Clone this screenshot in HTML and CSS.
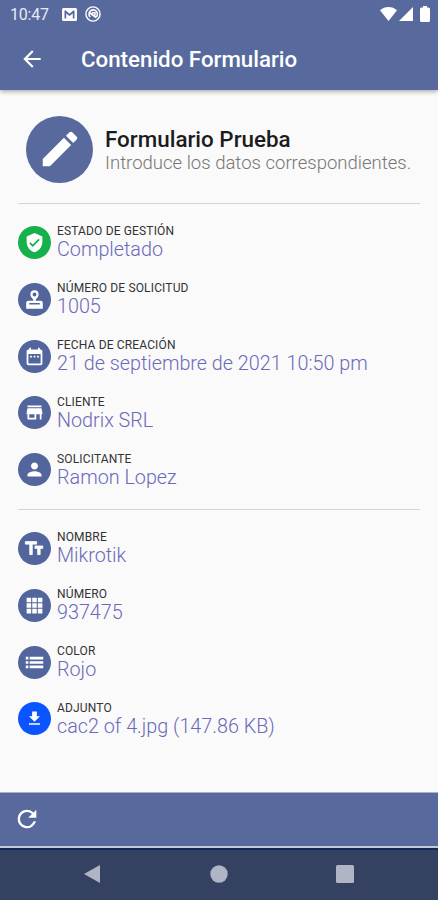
FILE: index.html
```html
<!DOCTYPE html>
<html lang="es">
<head>
    <meta charset="UTF-8">
    <meta name="viewport" content="width=device-width, initial-scale=1.0">
    <title>Contenido Formulario</title>
    <link rel="stylesheet" href="styles.css">
</head>
<body>
    <div class="screen">
        <header class="top">
            <div class="status">
                <span class="time">10:47</span>
                <svg class="status-mail" viewBox="0 0 15 13"><path fill="#fff" fill-rule="evenodd" d="M1.500 0h12A1.500 1.500 0 0 1 15 1.500v10a1.500 1.500 0 0 1-1.500 1.500h-12A1.500 1.500 0 0 1 0 11.500v-10A1.500 1.500 0 0 1 1.500 0zM2.500 2.500V10.500h1.700V5.500l3.300 2.600 3.300-2.600v5h1.700v-8h-1.300L7.500 5.700 3.800 2.500z"/></svg>
                <svg class="status-app" viewBox="0 0 16 16" fill="none" stroke="#fff"><circle cx="8" cy="8" r="7.100" stroke-width="1.400"/><path d="M5.200 11A4.200 4.200 0 1 1 11 11.200M4.500 6.500l6.500 5M7 6.500l3 .5v2.500" stroke-width="1.600"/></svg>
                <span class="spacer"></span>
                <svg class="wifi" viewBox="0 0 17 14"><path fill="#fff" d="M8.500 14L0 3.300C2.300 1.200 5.200 0 8.500 0S14.700 1.200 17 3.300z"/></svg>
                <svg class="signal" viewBox="0 0 14 14"><path fill="#fff" d="M14 0v14H0z"/></svg>
                <svg class="battery" viewBox="0 0 10 16"><path fill="#fff" d="M3 0h4v1.500h1.500A1.500 1.500 0 0 1 10 3v11.500a1.500 1.500 0 0 1-1.500 1.500h-7A1.500 1.500 0 0 1 0 14.500V3a1.500 1.500 0 0 1 1.500-1.500H3z"/></svg>
            </div>
            <div class="toolbar">
                <svg class="back" viewBox="0 0 24 24"><path fill="#fff" d="M20 11H7.830l5.590-5.590L12 4l-8 8 8 8 1.410-1.410L7.830 13H20v-2z"/></svg>
                <h1>Contenido Formulario</h1>
            </div>
        </header>

        <main>
            <section class="intro">
                <div class="avatar">
                    <svg viewBox="0 0 24 24"><path d="M3 17.250V21h3.750L17.810 9.940l-3.750-3.750L3 17.250zM20.710 7.040a1 1 0 0 0 0-1.410l-2.340-2.340a1 1 0 0 0-1.410 0l-1.830 1.830 3.750 3.750 1.830-1.830z"/></svg>
                </div>
                <div class="heading">
                    <h2>Formulario Prueba</h2>
                    <p>Introduce los datos correspondientes.</p>
                </div>
            </section>

            <section class="list">
                <div class="row">
                    <div class="icon green"><svg viewBox="0 0 24 24"><path d="M12 1L3 5v6c0 5.550 3.840 10.740 9 12 5.160-1.260 9-6.450 9-12V5l-9-4zm-2 16l-4-4 1.410-1.410L10 14.170l6.590-6.590L18 9l-8 8z"/></svg></div>
                    <div class="text"><span class="label">ESTADO DE GESTIÓN</span><span class="value">Completado</span></div>
                </div>
                <div class="row">
                    <div class="icon"><svg viewBox="0 0 24 24"><path fill-rule="evenodd" d="M12 1.500a4.700 4.700 0 0 1 4.700 4.700c0 2-1.300 3.500-3.300 5.800V13.500H19a2.500 2.500 0 0 1 2.500 2.500v6.500h-19V16A2.500 2.500 0 0 1 5 13.500h5.600V12C8.600 9.700 7.300 8.200 7.300 6.200A4.700 4.700 0 0 1 12 1.500zm0 2.600a2.200 2.200 0 1 0 0 4.400 2.200 2.200 0 0 0 0-4.400zM6 16v1.800h12V16z"/></svg></div>
                    <div class="text"><span class="label">NÚMERO DE SOLICITUD</span><span class="value">1005</span></div>
                </div>
                <div class="row">
                    <div class="icon"><svg viewBox="0 0 24 24"><path d="M9 11H7v2h2v-2zm4 0h-2v2h2v-2zm4 0h-2v2h2v-2zm2-7h-1V2h-2v2H8V2H6v2H5c-1.110 0-1.990.9-1.990 2L3 20a2 2 0 0 0 2 2h14c1.100 0 2-.9 2-2V6c0-1.100-.9-2-2-2zm0 16H5V9h14v11z"/></svg></div>
                    <div class="text"><span class="label">FECHA DE CREACIÓN</span><span class="value">21 de septiembre de 2021 10:50 pm</span></div>
                </div>
                <div class="row">
                    <div class="icon"><svg viewBox="0 0 24 24"><path d="M20 4H4v2h16V4zm1 10v-2l-1-5H4l-1 5v2h1v6h10v-6h4v6h2v-6h1zm-9 4H6v-4h6v4z"/></svg></div>
                    <div class="text"><span class="label">CLIENTE</span><span class="value">Nodrix SRL</span></div>
                </div>
                <div class="row">
                    <div class="icon"><svg viewBox="0 0 24 24"><path d="M12 12c2.210 0 4-1.790 4-4s-1.790-4-4-4-4 1.790-4 4 1.790 4 4 4zm0 2c-2.670 0-8 1.340-8 4v2h16v-2c0-2.660-5.330-4-8-4z"/></svg></div>
                    <div class="text"><span class="label">SOLICITANTE</span><span class="value">Ramon Lopez</span></div>
                </div>
            </section>

            <section class="list">
                <div class="row">
                    <div class="icon bold"><svg viewBox="0 0 24 24"><path d="M1.500 4v3h5v12h3V7h5V4h-13zm20 5h-9v3h3v7h3v-7h3V9z"/></svg></div>
                    <div class="text"><span class="label">NOMBRE</span><span class="value">Mikrotik</span></div>
                </div>
                <div class="row">
                    <div class="icon"><svg viewBox="0 0 24 24"><path d="M3 3h5.200v5.200H3zM9.400 3h5.200v5.200H9.400zM15.800 3H21v5.200h-5.200zM3 9.400h5.200v5.200H3zM9.400 9.400h5.200v5.200H9.400zM15.800 9.400H21v5.200h-5.200zM3 15.800h5.200V21H3zM9.400 15.800h5.200V21H9.400zM15.800 15.800H21V21h-5.200z"/></svg></div>
                    <div class="text"><span class="label">NÚMERO</span><span class="value">937475</span></div>
                </div>
                <div class="row">
                    <div class="icon"><svg viewBox="0 0 24 24"><path d="M2 5.500h3v3H2zM2 10.500h3v3H2zM2 15.500h3v3H2zM6.500 5.500H22v3H6.500zM6.500 10.500H22v3H6.500zM6.500 15.500H22v3H6.500z"/></svg></div>
                    <div class="text"><span class="label">COLOR</span><span class="value">Rojo</span></div>
                </div>
                <div class="row">
                    <div class="icon blue"><svg viewBox="0 0 24 24"><path d="M19 9h-4V3H9v6H5l7 7 7-7zM5 18v2h14v-2H5z"/></svg></div>
                    <div class="text"><span class="label">ADJUNTO</span><span class="value">cac2 of 4.jpg (147.86 KB)</span></div>
                </div>
            </section>
        </main>

        <footer class="actions">
            <svg viewBox="0 0 24 24"><path fill="#fff" d="M17.650 6.350A7.958 7.958 0 0 0 12 4a8 8 0 1 0 7.730 10h-2.080A6 6 0 1 1 12 6c1.660 0 3.140.69 4.220 1.780L13 11h7V4l-2.350 2.350z"/></svg>
        </footer>
        <nav class="navbar">
            <svg viewBox="0 0 20 20"><path d="M18 1v18L2 10z"/></svg>
            <svg viewBox="0 0 20 20"><circle cx="10" cy="10" r="8.700"/></svg>
            <svg viewBox="0 0 20 20"><rect x="1" y="1" width="18" height="18" rx="1.500"/></svg>
        </nav>
    </div>
</body>
</html>
```
FILE: styles.css
```css
* {
    box-sizing: border-box;
}
body {
    margin: 0;
    font-family: Roboto, sans-serif;
    background-color: #fafafa;
}
h1, h2, p {
    margin: 0;
}
svg {
    display: block;
    flex: none;
}
.screen {
    height: 900px;
    display: flex;
    flex-direction: column;
    overflow: hidden;
}
.top {
    height: 90px;
    background-color: #586a9d;
    color: #fff;
    box-shadow: 0 1px 5px rgba(0, 0, 0, 0.4);
}
.status {
    height: 28px;
    display: flex;
    align-items: center;
    padding: 0 8px 0 10px;
}
.time {
    font-size: 16px;
    color: #e6eaf6;
    letter-spacing: -0.2px;
}
.status-mail {
    width: 15px;
    height: 13px;
    margin-left: 13px;
}
.status-app {
    width: 16px;
    height: 16px;
    margin-left: 8px;
}
.spacer {
    flex: 1;
}
.wifi {
    width: 17px;
    height: 14px;
}
.signal {
    width: 14px;
    height: 14px;
    margin-left: 2px;
}
.battery {
    width: 10px;
    height: 16px;
    margin-left: 7px;
}
.toolbar {
    height: 62px;
    display: flex;
    align-items: center;
    padding-left: 19px;
}
.back {
    width: 26px;
    height: 26px;
}
.toolbar h1 {
    margin-left: 36px;
    font-size: 22.300px;
    font-weight: 500;
}
main {
    flex: 1;
    padding: 0 18px;
}
.intro {
    height: 113px;
    display: flex;
    align-items: center;
    padding: 5px 0 0 8px;
    gap: 12px;
}
.avatar {
    width: 67px;
    height: 67px;
    border-radius: 50%;
    background-color: #586a9d;
    display: flex;
    align-items: center;
    justify-content: center;
}
.avatar svg {
    width: 46px;
    height: 46px;
    fill: #fff;
}
.heading {
    padding-top: 3px;
}
.intro h2 {
    font-size: 22.400px;
    line-height: 25px;
    font-weight: 500;
    color: #1c1c1c;
}
.intro p {
    font-size: 18.550px;
    line-height: 22px;
    font-weight: 300;
    color: #777;
    white-space: nowrap;
}
.list {
    border-top: 1px solid #d4d4d4;
    padding: 20.300px 0 21.100px;
    display: flex;
    flex-direction: column;
    gap: 20.900px;
}
.row {
    height: 36px;
    display: flex;
    align-items: center;
    gap: 6px;
}
.icon {
    width: 33px;
    height: 33px;
    border-radius: 50%;
    background-color: #52659c;
    display: flex;
    align-items: center;
    justify-content: center;
}
.icon svg {
    width: 21px;
    height: 21px;
    fill: #fff;
}
.icon.bold svg {
    stroke: #fff;
    stroke-width: 0.8;
}
.icon.green {
    background-color: #16b14b;
}
.icon.blue {
    background-color: #0a55ff;
}
.icon.blue svg {
    width: 19px;
    height: 19px;
}
.text {
    display: flex;
    flex-direction: column;
    padding-top: 2px;
}
.label {
    font-size: 12px;
    line-height: 14px;
    letter-spacing: 0.15px;
    color: #333;
}
.value {
    font-size: 19.750px;
    line-height: 24px;
    font-weight: 300;
    color: #6b69b8;
    white-space: nowrap;
}
.actions {
    height: 54px;
    background-color: #586a9d;
    border-top: 1px solid #a9b2cd;
    display: flex;
    align-items: center;
    padding: 0 0 1px 13px;
}
.actions svg {
    width: 28px;
    height: 28px;
}
.navbar {
    height: 54px;
    background-color: #354161;
    border-top: 2px solid #c3c9dc;
    box-shadow: inset 0 2px 0 #152852;
    display: flex;
    align-items: center;
    justify-content: space-between;
    padding: 0 83px 0 82px;
}
.navbar svg {
    width: 20px;
    height: 20px;
    fill: #b0b5c6;
}
```
